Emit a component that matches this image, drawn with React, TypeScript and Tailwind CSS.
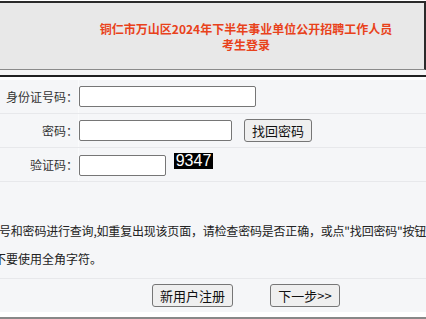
import React from "react";

export default function App() {
  const cjk = "font-['Noto_Sans_CJK_SC','Noto_Sans',sans-serif]";
  return (
    <div className={`w-[426px] h-[319px] overflow-hidden bg-white ${cjk} text-[#333]`}>
      <div className="h-[1px]" />
      <div className="h-[69px] border-t-2 border-r-2 border-b border-t-[#2a2a2a] border-r-[#2a2a2a] border-b-[#8a8a8a] bg-[#e8e8e8] flex flex-col items-center justify-center pl-[68px] pt-[1px]">
        <div className="text-[12px] leading-[16px] font-bold text-[#e8421b] whitespace-nowrap">
          铜仁市万山区2024年下半年事业单位公开招聘工作人员
        </div>
        <div className="text-[12px] leading-[16px] font-bold text-[#e8421b] whitespace-nowrap">
          考生登录
        </div>
      </div>
      <div className="h-[5px] bg-[#f7f7f7]" />
      <div className="h-[2px] bg-[#222]" />
      <div className="h-[3px] bg-white" />

      {/* row 1 */}
      <div className="flex h-[34px] border-b border-[#e7e8eb] bg-[#f5f6f8]">
        <div className="w-[79px] flex items-center justify-end text-[12px] whitespace-nowrap border-r border-[#fafbfc]">
          身份证号码：
        </div>
        <div className="flex items-center">
          <div className="w-[177px] h-[21px] bg-white border border-[#767676] rounded-[2px]" />
        </div>
      </div>

      {/* row 2 */}
      <div className="flex h-[34px] border-b border-[#e7e8eb] bg-[#f5f6f8]">
        <div className="w-[79px] flex items-center justify-end text-[12px] whitespace-nowrap border-r border-[#fafbfc]">
          密码：
        </div>
        <div className="flex items-center gap-[12px]">
          <div className="w-[153px] h-[21px] bg-white border border-[#767676] rounded-[2px]" />
          <button className="w-[68px] h-[23px] bg-[#efefef] border border-[#767676] rounded-[3px] text-[13px] leading-none text-[#111] flex items-center justify-center">
            找回密码
          </button>
        </div>
      </div>

      {/* row 3 */}
      <div className="flex h-[34px] border-b border-[#e7e8eb] bg-[#f5f6f8]">
        <div className="w-[79px] flex items-center justify-end text-[12px] whitespace-nowrap border-r border-[#fafbfc]">
          验证码：
        </div>
        <div className="flex items-start gap-[8px]">
          <div className="mt-[7px] w-[87px] h-[21px] bg-white border border-[#767676] rounded-[2px]" />
          <div className="mt-[5px] w-[39px] h-[16px] bg-black text-white font-['Liberation_Sans',sans-serif] text-[16px] leading-[16px] flex items-center justify-center">
            9347
          </div>
        </div>
      </div>

      {/* text area */}
      <div className="h-[97px] border-b border-[#e7e8eb] bg-[#f5f6f8] overflow-hidden pt-[40px] text-[12px] leading-[18px] text-[#222]">
        <p className="ml-[-1px] whitespace-nowrap tracking-[-0.2px]">号和密码进行查询,如重复出现该页面，请检查密码是否正确，或点"找回密码"按钮找回密码。</p>
        <p className="ml-[-6px] mt-[10px] whitespace-nowrap">不要使用全角字符。</p>
      </div>

      {/* buttons */}
      <div className="h-[33px] bg-[#f5f6f8] flex items-center pl-[152px] gap-[37px]">
        <button className="w-[81px] h-[23px] bg-[#efefef] border border-[#767676] rounded-[3px] text-[13px] leading-none text-[#111] flex items-center justify-center">
          新用户注册
        </button>
        <button className="w-[70px] h-[23px] bg-[#efefef] border border-[#767676] rounded-[3px] text-[13px] leading-none text-[#111] flex items-center justify-center">
          下一步&gt;&gt;
        </button>
      </div>
      <div className="h-[5px] bg-white" />
      <div className="h-[2px] bg-[#888]" />
    </div>
  );
}
